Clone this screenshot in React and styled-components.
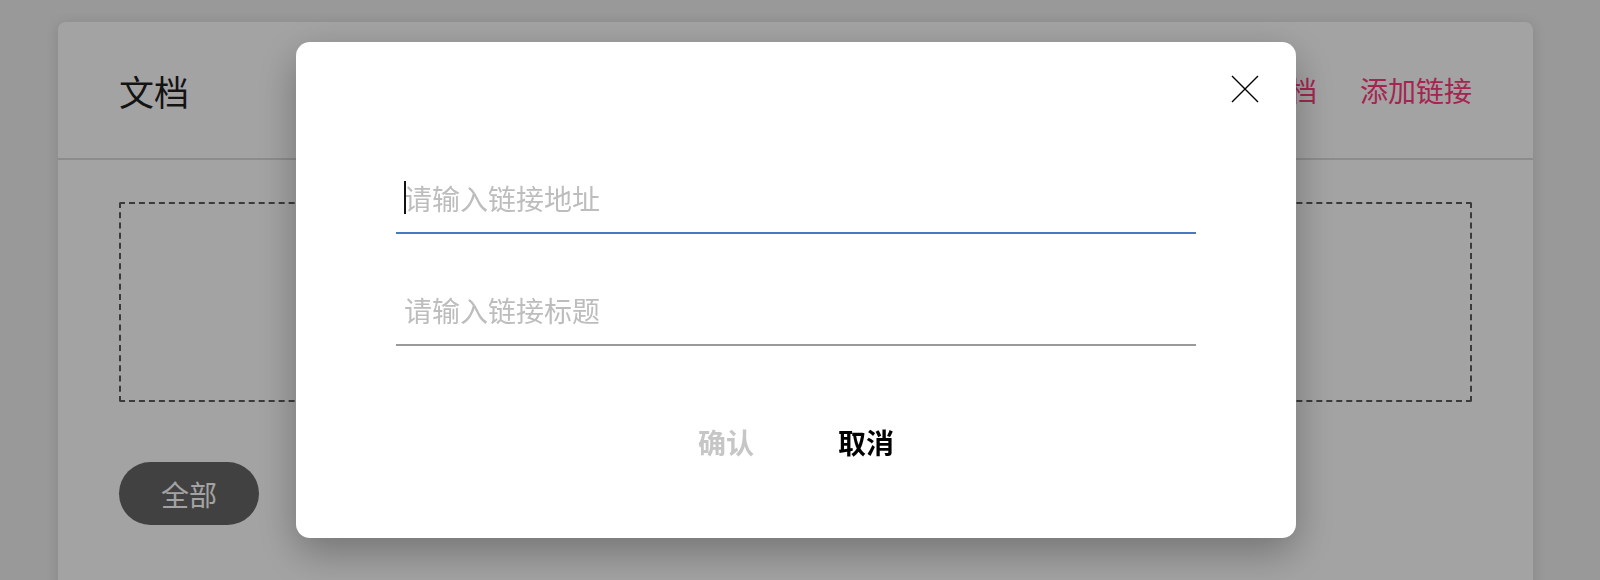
import React from 'react';
import styled, { createGlobalStyle } from 'styled-components';

const GlobalStyle = createGlobalStyle`
  html, body {
    margin: 0;
    padding: 0;
    height: 100%;
    overflow: hidden;
    background: #efefef;
    font-family: "Noto Sans CJK SC", "Noto Sans", sans-serif;
  }
`;

const Page = styled.div`
  padding: 22px 67px 0 58px;
`;

const Card = styled.section`
  background: #fff;
  border-radius: 8px;
  box-shadow: 0 2px 14px rgba(0, 0, 0, 0.12);
  min-height: 620px;
`;

const Header = styled.header`
  height: 136px;
  padding: 0 61px;
  display: flex;
  align-items: center;
  justify-content: space-between;
  border-bottom: 2px solid #dcdcdc;
`;

const Title = styled.h1`
  margin: 0;
  font-size: 35px;
  font-weight: 400;
  color: #1f1f1f;
`;

const Actions = styled.nav`
  display: flex;
  gap: 43px;
`;

const ActionLink = styled.a`
  font-size: 28px;
  color: rgb(255, 58, 125);
  text-decoration: none;
  cursor: pointer;
`;

const Body = styled.div`
  padding: 42px 61px;
`;

const DropZone = styled.div`
  height: 196px;
  border: 2px dashed #5c5c5c;
  border-radius: 2px;
`;

const Pill = styled.button`
  margin-top: 60px;
  width: 140px;
  height: 63px;
  border: none;
  border-radius: 32px;
  background: ${(p) => (p.active ? '#666' : '#fff')};
  color: ${(p) => (p.active ? '#fff' : '#333')};
  font-family: inherit;
  font-size: 28px;
`;

const Overlay = styled.div`
  position: fixed;
  inset: 0;
  background: rgba(0, 0, 0, 0.36);
  display: flex;
  align-items: center;
  justify-content: center;
  padding-right: 8px;
`;

const Modal = styled.div`
  position: relative;
  width: 1000px;
  box-sizing: border-box;
  padding: 124px 100px 76px;
  background: #fff;
  border-radius: 14px;
  box-shadow: 0 14px 40px rgba(0, 0, 0, 0.3);
`;

const CloseButton = styled.button`
  position: absolute;
  top: 33px;
  right: 37px;
  width: 28px;
  height: 28px;
  padding: 0;
  border: none;
  background: none;
  cursor: pointer;
`;

const Field = styled.div`
  position: relative;
  & + & {
    margin-top: 44px;
  }
`;

const Input = styled.input`
  display: block;
  width: 100%;
  box-sizing: border-box;
  height: 68px;
  padding: 12px 8px 14px;
  border: none;
  border-bottom: 2px solid ${(p) => (p.focused ? '#4a78bd' : '#9a9a9a')};
  outline: none;
  font-family: inherit;
  font-size: 28px;
  line-height: 40px;
  color: #222;

  &::placeholder {
    color: #bdbdbd;
  }
`;

const Caret = styled.span`
  position: absolute;
  left: 8px;
  top: 15px;
  width: 2px;
  height: 33px;
  background: #111;
`;

const ButtonRow = styled.div`
  margin-top: 76px;
  display: flex;
  justify-content: center;
  gap: 84px;
`;

const TextButton = styled.button`
  padding: 0;
  border: none;
  background: none;
  font-family: inherit;
  font-size: 28px;
  font-weight: 700;
  line-height: 40px;
  color: ${(p) => (p.disabled ? '#c6c6c6' : '#000')};
`;

const CloseIcon = () => (
  <svg width="28" height="28" viewBox="0 0 28 28">
    <path d="M1 1 L27 27 M27 1 L1 27" stroke="#000" strokeWidth="1.4" fill="none" />
  </svg>
);

const App = () => (
  <>
    <GlobalStyle />
    <Page>
      <Card>
        <Header>
          <Title>文档</Title>
          <Actions>
            <ActionLink>上传文档</ActionLink>
            <ActionLink>添加链接</ActionLink>
          </Actions>
        </Header>
        <Body>
          <DropZone />
          <Pill active>全部</Pill>
        </Body>
      </Card>
    </Page>
    <Overlay>
      <Modal>
        <CloseButton aria-label="关闭">
          <CloseIcon />
        </CloseButton>
        <Field>
          <Input focused placeholder="请输入链接地址" />
          <Caret />
        </Field>
        <Field>
          <Input placeholder="请输入链接标题" />
        </Field>
        <ButtonRow>
          <TextButton disabled>确认</TextButton>
          <TextButton>取消</TextButton>
        </ButtonRow>
      </Modal>
    </Overlay>
  </>
);

export default App;
